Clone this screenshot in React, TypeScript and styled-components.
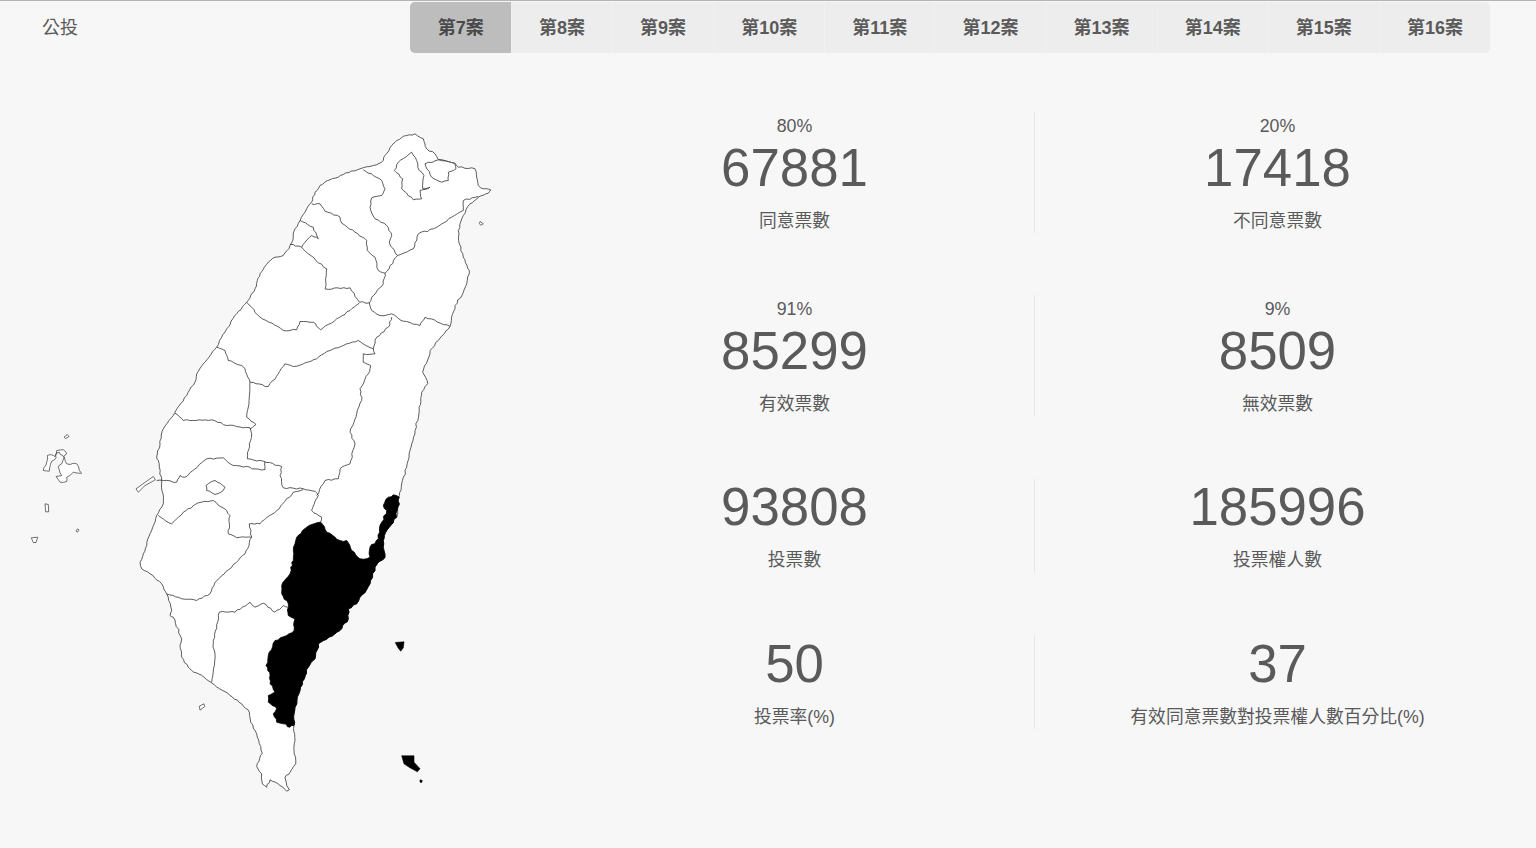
import React from "react";
import styled, { createGlobalStyle } from "styled-components";

const tabs = [7, 8, 9, 10, 11, 12, 13, 14, 15, 16];

type Stat = { percent?: string; value: string; label: string };

const rows: { cells: [Stat, Stat] }[] = [
  {
    cells: [
      { percent: "80%", value: "67881", label: "同意票數" },
      { percent: "20%", value: "17418", label: "不同意票數" },
    ],
  },
  {
    cells: [
      { percent: "91%", value: "85299", label: "有效票數" },
      { percent: "9%", value: "8509", label: "無效票數" },
    ],
  },
  {
    cells: [
      { value: "93808", label: "投票數" },
      { value: "185996", label: "投票權人數" },
    ],
  },
  {
    cells: [
      { value: "50", label: "投票率(%)" },
      { value: "37", label: "有效同意票數對投票權人數百分比(%)" },
    ],
  },
];

type Pt = [number, number];

// coordinates were read off 3x crops, so each list keeps its crop origin
const pts = (ox: number, oy: number, s: string): Pt[] =>
  s
    .trim()
    .split(/\s+/)
    .map((p) => {
      const [x, y] = p.split(",").map(Number);
      return [ox + x / 3, oy + y / 3] as Pt;
    });

const noise = (x: number, y: number) => {
  const n = Math.sin(x * 12.9898 + y * 78.233) * 43758.5453;
  return n - Math.floor(n) - 0.5;
};

// the traced points are sparse, real borders are jagged: add a repeatable wobble
const wobble = (list: Pt[], amount = 1.5): Pt[] => {
  const out: Pt[] = [];
  list.forEach((a, i) => {
    out.push(a);
    const b = list[i + 1];
    if (!b) return;
    const dx = b[0] - a[0];
    const dy = b[1] - a[1];
    const len = Math.hypot(dx, dy);
    const steps = Math.ceil(len / 3.5);
    for (let k = 1; k < steps; k++) {
      const t = k / steps;
      const x = a[0] + dx * t;
      const y = a[1] + dy * t;
      const off = noise(x, y) * amount;
      out.push([x - (dy / len) * off, y + (dx / len) * off]);
    }
  });
  return out;
};

const toPath = (list: Pt[]) =>
  "M" + list.map((p) => `${p[0].toFixed(1)} ${p[1].toFixed(1)}`).join("L");
const line = (ox: number, oy: number, s: string) => toPath(wobble(pts(ox, oy, s)));
const ring = (ox: number, oy: number, s: string) => toPath(pts(ox, oy, s)) + "Z";
const wavyRing = (ox: number, oy: number, s: string) => {
  const list = pts(ox, oy, s);
  return toPath(wobble([...list, list[0]])) + "Z";
};

const north = (s: string) => pts(130, 120, s);
const middle = (s: string) => pts(130, 340, s);
const south = (s: string) => pts(130, 560, s);

const islandOutline =
  toPath(
    wobble([
      ...north(
        "350,545 362,525 375,505 382,480 390,460 403,440 415,425 435,410 460,405 472,390 480,375 490,350 495,325 510,300 530,265 545,245 555,215 570,195 600,178 640,162 690,145 730,135 755,125 765,105 785,75 800,60 830,45 855,40 880,55 890,85 915,100 925,117 975,128 985,140 1035,145 1040,170 1045,195 1060,205 1082,208 1075,218 1045,230 1020,250 1000,285 985,330 988,370 1000,410 1018,450 1010,490 1000,515 975,555 960,618 925,660 900,690",
      ),
      ...middle(
        "900,40 878,95 893,130 875,155 868,210 855,270 840,330 830,380 815,430 808,465 800,530 770,570 760,600 765,650 745,665",
      ),
      ...south(
        "735,20 720,70 680,130 655,145 655,175 630,210 565,250 555,295 535,320 510,390 495,440 492,495 495,540 492,570 497,610 480,635 465,650 470,675 478,688 470,692 450,675 420,658 410,680 397,670 395,640 380,618 397,578 380,520 362,485 358,455 335,430 300,405 245,367 205,340 185,330 175,320 155,290 150,255 155,235 130,170 120,165 125,150 110,100 95,70 60,40 35,25 30,5",
      ),
      ...middle(
        "40,640 60,580 80,525 100,490 95,420 85,360 80,350 100,265 135,215 170,165 195,125 200,100 225,65 260,20",
      ),
      ...north("290,625 320,580 350,545"),
    ]),
  ) + "Z";

const taitung =
  toPath(
    wobble([
      ...middle("790,463 808,470 800,530 770,570 760,600 765,650 745,665"),
      ...south(
        "735,20 720,70 680,130 655,145 655,175 630,210 565,250 555,295 535,320 510,390 495,440 492,495 480,500 460,490 440,485 430,460 440,445 415,425 415,405 435,395 420,370 420,345 408,315 415,285 435,240 470,225 492,210 495,175 475,165 475,130 455,100 455,75 480,40 482,20 490,0",
      ),
      ...middle(
        "490,630 500,590 530,560 572,545 590,575 630,600 650,600 665,630 690,655 720,650 720,620 745,595 755,545 770,510 760,495 775,470 790,463",
      ),
    ], 2.2),
  ) + "Z";

const borders = [
  line(130, 120, "700,148 730,165 755,180 765,205 755,225 725,232 720,260 735,295 770,315 785,345 778,365 795,395 803,405"),
  line(130, 120, "803,405 850,385 865,340 910,325 965,290 1000,270 1000,240 1045,228"),
  line(130, 120, "545,250 570,250 585,272 630,290 635,308 675,335 710,360 712,390 735,410 745,450 765,458 803,405"),
  line(130, 120, "765,458 760,490 725,530 718,547 725,570 750,585 785,580 810,598 870,615 885,590 960,618"),
  line(130, 120, "510,300 550,320 565,355 545,345 515,380 480,372"),
  line(130, 120, "515,380 535,400 590,445 585,505 660,502 688,545 718,547"),
  line(130, 120, "350,545 390,590 460,630 500,628 510,603 550,605 572,628 620,595 660,570 688,548"),
  line(130, 120, "785,590 775,620 740,650 730,685 685,660 640,675 600,690 550,718"),
  line(130, 340, "550,58 520,70 490,78 465,70 445,100 415,138 360,125 345,85 335,75 295,60 285,30 260,20"),
  line(130, 340, "730,25 735,40 700,40 700,65 722,75 715,100 690,145 695,180 660,275 675,310 660,370 630,385 625,415 585,420 560,465"),
  line(130, 340, "360,125 358,170 350,230 378,252 360,265"),
  line(130, 340, "135,218 160,240 245,238 290,255 360,262 365,280 358,310 352,355 400,362 455,378 450,405 460,442 520,445 555,452 565,465 545,510 575,530 572,545"),
  line(130, 340, "80,420 100,420 140,425 150,405 165,410 230,355 280,352 310,375 360,380 365,385 405,387 405,362"),
  line(130, 340, "85,525 125,550 160,515 205,487 250,480 290,510 300,525 295,580 320,592 365,590"),
  line(130, 340, "365,590 358,550 390,550 440,510 490,455 520,447"),
  toPath(
    wobble([
      ...middle("365,590 345,640"),
      ...south("325,0 260,60 240,100 200,120 155,115 110,100"),
    ]),
  ),
  line(130, 560, "475,140 460,135 435,155 400,128 375,140 360,125 315,155 268,155 250,250 255,295 245,365"),
];

// Taipei city sits inside New Taipei; Keelung is the small patch to its right
const enclaves = [
  wavyRing(130, 120, "845,95 860,120 868,150 882,165 878,205 900,200 870,210 875,235 850,238 815,205 818,175 793,150 805,125"),
  wavyRing(130, 120, "885,130 925,118 975,130 978,145 955,155 955,180 935,185 905,170"),
  wavyRing(130, 340, "228,435 255,420 285,440 280,450 255,462 230,450"),
];

const outerIslands = [
  ring(130, 120, "1050,303 1060,310 1052,314 1048,309"),
  ring(130, 340, "18,445 70,408 76,418 45,435 25,455"),
  ring(130, 560, "208,437 222,430 224,438 210,449"),
  ring(20, 420, "132,50 142,42 147,48 137,54"),
  ring(20, 420, "75,250 85,252 86,274 77,274"),
  ring(20, 420, "168,330 174,325 177,330 171,335"),
  ring(20, 420, "34,352 53,350 48,366 40,366"),
  wavyRing(20, 420, "70,150 80,125 82,105 95,103 105,108 110,90 130,88 140,100 132,108 140,130 170,130 178,150 185,158 160,155 140,170 140,183 120,185 108,168 125,165 115,140 125,130 132,112 118,95 108,98 108,112 95,122 88,152"),
];

const blackIslands = [
  ring(130, 560, "796,246 822,244 820,262 812,272 804,262"),
  ring(130, 560, "815,586 852,586 852,605 870,625 862,634 840,622 822,610"),
  ring(130, 560, "870,658 877,660 875,666 870,665"),
];

const GlobalStyle = createGlobalStyle`
  html, body {
    margin: 0;
    padding: 0;
    background: #f7f7f7;
  }
  body {
    font-family: "Liberation Sans", "Noto Sans CJK TC", sans-serif;
    color: #5a5a5a;
  }
`;

const Page = styled.div`
  width: 1536px;
  height: 848px;
  overflow: hidden;
  background: #f7f7f7;
  border-top: 1px solid #b4b4b4;
  box-sizing: border-box;
`;

const TopBar = styled.div`
  display: flex;
  align-items: flex-start;
  height: 52px;
  padding: 1px 46px 0 42px;
  box-sizing: border-box;
`;

const Title = styled.div`
  flex: 1;
  font-size: 18px;
  line-height: 52px;
`;

const TabList = styled.div`
  display: flex;
  height: 51px;
  margin-bottom: -1px;
  background: #ededed;
  border-radius: 5px;
  overflow: hidden;
`;

const Tab = styled.div<{ $active?: boolean }>`
  display: flex;
  align-items: center;
  padding: 0 27.1px 4px 28px;
  font-size: 18px;
  font-weight: 700;
  white-space: nowrap;
  color: ${(p) => (p.$active ? "#484848" : "#5a5a5a")};
  background: ${(p) => (p.$active ? "#bdbdbd" : "transparent")};
  & + & {
    box-shadow: inset 1px 0 0 #f0f0f0;
  }
`;

const Content = styled.div`
  display: flex;
`;

const MapColumn = styled.div`
  width: 554px;
  flex: none;
`;

const MapDrawing = styled.svg`
  display: block;
  width: 554px;
  height: 795px;
`;

const Stats = styled.div`
  flex: 1;
  padding: 59px 16px 0 0;
  display: flex;
  flex-direction: column;
  gap: 62.4px;
`;

const Row = styled.div`
  display: grid;
  grid-template-columns: 480px 1fr;
`;

const Cell = styled.div`
  display: flex;
  flex-direction: column;
  align-items: center;
  padding-top: 1px;
  &:first-child {
    padding-left: 1px;
  }
  & + & {
    border-left: 1px solid #e6e6e6;
  }
`;

const Percent = styled.div`
  font-size: 17.8px;
  line-height: 27px;
`;

const Value = styled.div`
  font-size: 52.8px;
  line-height: 52.5px;
  margin-top: 1.5px;
`;

const Label = styled.div`
  font-size: 17.8px;
  line-height: 27px;
  margin: 13.5px 0 -1.5px;
`;

export default function App() {
  return (
    <Page>
      <GlobalStyle />
      <TopBar>
        <Title>公投</Title>
        <TabList>
          {tabs.map((n) => (
            <Tab key={n} $active={n === 7}>
              第{n}案
            </Tab>
          ))}
        </TabList>
      </TopBar>
      <Content>
        <MapColumn>
          <MapDrawing viewBox="0 52.5 554 795">
            <path d={islandOutline} fill="#fff" stroke="#333" strokeWidth="0.8" />
            {enclaves.map((d) => (
              <path key={d} d={d} fill="#fff" stroke="#333" strokeWidth="0.8" />
            ))}
            {borders.map((d) => (
              <path key={d} d={d} fill="none" stroke="#333" strokeWidth="0.8" />
            ))}
            {outerIslands.map((d) => (
              <path key={d} d={d} fill="#fff" stroke="#333" strokeWidth="0.7" />
            ))}
            <path d={taitung} fill="#000" stroke="#000" strokeWidth="0.8" />
            {blackIslands.map((d) => (
              <path key={d} d={d} fill="#000" stroke="#000" strokeWidth="0.6" />
            ))}
          </MapDrawing>
        </MapColumn>
        <Stats>
          {rows.map((row) => (
            <Row key={row.cells[0].label}>
              {row.cells.map((c) => (
                <Cell key={c.label}>
                  {c.percent && <Percent>{c.percent}</Percent>}
                  <Value>{c.value}</Value>
                  <Label>{c.label}</Label>
                </Cell>
              ))}
            </Row>
          ))}
        </Stats>
      </Content>
    </Page>
  );
}
